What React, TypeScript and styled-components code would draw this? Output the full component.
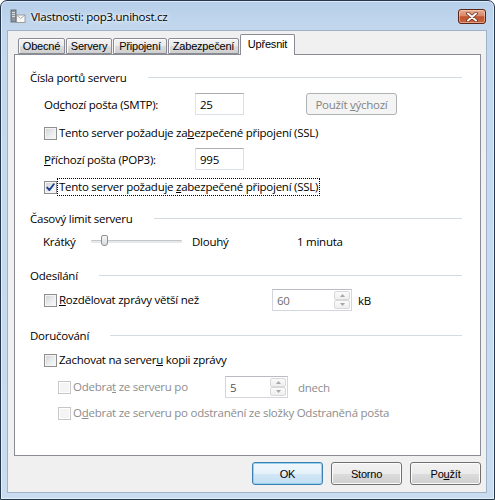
import React from "react";
import styled, { createGlobalStyle } from "styled-components";

const UI = `"Open Sans", "Noto Sans", sans-serif`;
const SHELL = `"Liberation Sans", Arial, sans-serif`;

const GlobalStyle = createGlobalStyle`
  html, body { margin: 0; padding: 0; background: #ffffff; }
  body { font-family: ${UI}; font-size: 11.5px; letter-spacing: -0.25px; color: #000; }
  * { box-sizing: border-box; }
`;

const Window = styled.div`
  width: 495px;
  height: 500px;
  display: flex;
  flex-direction: column;
  padding: 0 7px 6px 6px;
  border: 1px solid #26384e;
  border-radius: 7px 7px 0 0;
  background: linear-gradient(180deg, #b7cfe9 0px, #c3d8ee 30px, #c9dcf0 100%);
  box-shadow: inset 0 0 0 1px rgba(255, 255, 255, 0.55);
`;

const TitleBar = styled.div`
  height: 29px;
  display: flex;
  align-items: center;
  padding: 2px 1px 0 3px;
`;

const TitleText = styled.span`
  margin-left: 5px;
  font-family: ${UI};
  font-size: 11.5px;
  letter-spacing: -0.25px;
  color: #000;
  text-shadow: 0 0 6px #fff, 0 0 3px #fff;
`;

const CloseButton = styled.div`
  margin-left: auto;
  width: 28px;
  height: 15px;
  border: 1px solid #5b2417;
  border-radius: 3px;
  display: flex;
  align-items: center;
  justify-content: center;
  background: linear-gradient(180deg, #e6ab92 0%, #d88a68 45%, #bf5330 52%, #c8673d 100%);
  box-shadow: inset 0 0 0 1px rgba(255, 220, 200, 0.5);
`;

const Client = styled.div`
  flex: 1;
  display: flex;
  flex-direction: column;
  background: #f0f0f0;
  border: 1px solid #9fb2c8;
  padding: 3px 5px 7px 6px;
`;

const TabBar = styled.div`
  height: 20px;
  display: flex;
  align-items: flex-end;
  padding-left: 4px;
`;

const Tab = styled.div<{ $w: number; $active?: boolean }>`
  width: ${(p) => p.$w}px;
  height: ${(p) => (p.$active ? 21 : 16)}px;
  margin-bottom: ${(p) => (p.$active ? -1 : 0)}px;
  position: relative;
  z-index: ${(p) => (p.$active ? 1 : 0)};
  display: flex;
  align-items: center;
  justify-content: center;
  padding-bottom: ${(p) => (p.$active ? 3 : 0)}px;
  font-family: ${SHELL};
  font-size: 11px;
  letter-spacing: -0.2px;
  color: #000;
  border: 1px solid #898c95;
  border-bottom: ${(p) => (p.$active ? "none" : "1px solid #898c95")};
  border-radius: 2px 2px 0 0;
  background: ${(p) =>
    p.$active ? "#ffffff" : "linear-gradient(180deg, #f2f2f2 0%, #ebebeb 50%, #dcdcdc 51%, #cfcfcf 100%)"};
  box-shadow: ${(p) => (p.$active ? "none" : "inset 0 1px 0 #fff, inset 1px 0 0 #fafafa")};
  margin-right: 1px;
`;

const Panel = styled.div`
  flex: 1;
  display: flex;
  flex-direction: column;
  background: #ffffff;
  border: 1px solid #898c95;
  padding: 14px 18px 0 15px;
`;

const Section = styled.div<{ $top: number }>`
  display: flex;
  align-items: center;
  height: 16px;
  margin-top: ${(p) => p.$top}px;
`;

const SectionTitle = styled.span`
  white-space: nowrap;
`;

const Rule = styled.div`
  flex: 1;
  height: 1px;
  margin-left: 21px;
  background: #d3dbe2;
`;

const Row = styled.div<{ $top: number; $h?: number; $indent?: number }>`
  display: flex;
  align-items: center;
  height: ${(p) => p.$h ?? 22}px;
  margin-top: ${(p) => p.$top}px;
  padding-left: ${(p) => p.$indent ?? 14}px;
  white-space: nowrap;
`;

const FieldLabel = styled.span<{ $w: number }>`
  width: ${(p) => p.$w}px;
`;

const TextBox = styled.div<{ $w: number }>`
  width: ${(p) => p.$w}px;
  height: 22px;
  display: flex;
  align-items: center;
  padding-left: 4px;
  background: #fff;
  border: 1px solid #dbdfe6;
  border-top-color: #abadb3;
  border-left-color: #e2e3ea;
`;

const DisabledButton = styled.div`
  margin-left: 62px;
  width: 91px;
  height: 22px;
  display: flex;
  align-items: center;
  justify-content: center;
  border: 1px solid #adb2b5;
  border-radius: 3px;
  background: #f4f4f4;
  color: #838383;
`;

const Check = styled.div<{ $w?: number }>`
  display: flex;
  align-items: center;
  width: ${(p) => (p.$w ? `${p.$w}px` : "auto")};
`;

const Box = styled.span<{ $disabled?: boolean }>`
  width: 13px;
  height: 13px;
  flex: none;
  display: flex;
  align-items: center;
  justify-content: center;
  border: 1px solid ${(p) => (p.$disabled ? "#c6c6c6" : "#8e8f8f")};
  background: ${(p) =>
    p.$disabled ? "#f4f4f4" : "linear-gradient(135deg, #cdd0d5 0%, #e9eaec 50%, #fbfbfb 100%)"};
  box-shadow: inset 0 0 0 1px ${(p) => (p.$disabled ? "#ffffff" : "#f4f4f4")};
`;

const CheckText = styled.span<{ $disabled?: boolean; $focus?: boolean }>`
  margin-left: ${(p) => (p.$focus ? 1 : 2)}px;
  padding: ${(p) => (p.$focus ? "0 1px" : "0")};
  color: ${(p) => (p.$disabled ? "#8d8d8d" : "#000")};
  outline: ${(p) => (p.$focus ? "1px dotted #000" : "none")};
  line-height: 16px;
`;

const Acc = styled.u`
  text-decoration: underline;
  text-underline-offset: 1px;
`;

const SlideLabel = styled.span<{ $w?: number }>`
  width: ${(p) => (p.$w ? `${p.$w}px` : "auto")};
`;

const Slider = styled.div`
  position: relative;
  width: 91px;
  height: 14px;
  margin: 0 10px 0 -1px;
`;

const Track = styled.div`
  position: absolute;
  left: 0;
  right: 0;
  top: 6px;
  height: 3px;
  border-radius: 1px;
  background: #e6e8e9;
  border-top: 1px solid #c4c7c9;
`;

const Thumb = styled.div`
  position: absolute;
  left: 10px;
  top: 1px;
  width: 7px;
  height: 11px;
  border: 1px solid #8d9193;
  border-radius: 2px 2px 3px 3px;
  background: linear-gradient(180deg, #f6f6f6, #dadcdd);
`;

const SpinBox = styled.div<{ $w: number }>`
  width: ${(p) => p.$w}px;
  height: 22px;
  display: flex;
  align-items: stretch;
  padding: 1px;
  background: #fff;
  border: 1px solid #d3d6dc;
  border-top-color: #b9bcc2;
`;

const SpinValue = styled.span<{ $color: string }>`
  flex: 1;
  display: flex;
  align-items: center;
  padding-left: 3px;
  color: ${(p) => p.$color};
`;

const SpinButtons = styled.div`
  width: 16px;
  display: flex;
  flex-direction: column;
`;

const SpinBtn = styled.div`
  flex: 1;
  display: flex;
  align-items: center;
  justify-content: center;
  border: 1px solid #d9d9d9;
  border-radius: 2px;
  background: linear-gradient(180deg, #fafafa, #efefef);
`;

const Unit = styled.span<{ $gap: number; $dim?: boolean }>`
  margin-left: ${(p) => p.$gap}px;
  color: ${(p) => (p.$dim ? "#8d8d8d" : "#000")};
`;

const ButtonRow = styled.div`
  display: flex;
  justify-content: flex-end;
  gap: 8px;
  margin-top: 6px;
`;

const DialogButton = styled.div<{ $default?: boolean }>`
  width: 71px;
  height: 23px;
  display: flex;
  align-items: center;
  justify-content: center;
  font-family: ${SHELL};
  font-size: 11px;
  letter-spacing: -0.2px;
  color: #000;
  border: 1px solid ${(p) => (p.$default ? "#3c7fb1" : "#707070")};
  border-radius: 3px;
  background: ${(p) =>
    p.$default
      ? "linear-gradient(180deg, #f1f8fd 0%, #e5f1fa 50%, #d2e7f6 51%, #c3def2 100%)"
      : "linear-gradient(180deg, #f2f2f2 0%, #ebebeb 50%, #dddddd 51%, #cfcfcf 100%)"};
  box-shadow: inset 0 0 0 1px ${(p) => (p.$default ? "#98d1ef" : "#fcfcfc")};
`;

const Arrow = ({ up }: { up?: boolean }) => (
  <svg width="5" height="3" viewBox="0 0 5 3">
    <path d={up ? "M0 3 L2.5 0 L5 3 Z" : "M0 0 L2.5 3 L5 0 Z"} fill="#a8a8a8" />
  </svg>
);

const Spin = ({ w, value, color }: { w: number; value: string; color: string }) => (
  <SpinBox $w={w}>
    <SpinValue $color={color}>{value}</SpinValue>
    <SpinButtons>
      <SpinBtn>
        <Arrow up />
      </SpinBtn>
      <SpinBtn>
        <Arrow />
      </SpinBtn>
    </SpinButtons>
  </SpinBox>
);

const CheckMark = () => (
  <svg width="9" height="9" viewBox="0 0 9 9">
    <path d="M1.2 4.6 L3.4 7 L7.8 1.2" fill="none" stroke="#1f3f8f" strokeWidth="1.9" strokeLinecap="round" strokeLinejoin="round" />
  </svg>
);

const TitleIcon = () => (
  <svg width="16" height="15" viewBox="0 0 16 15">
    <rect x="1" y="1" width="5" height="12" fill="#8d959e" stroke="#5b6167" strokeWidth="0.8" />
    <rect x="2" y="3" width="3" height="1" fill="#d9dde1" />
    <rect x="2" y="5" width="3" height="1" fill="#d9dde1" />
    <rect x="2" y="7" width="3" height="1" fill="#d9dde1" />
    <rect x="6.5" y="6" width="8.5" height="7.5" fill="#f8f8f8" stroke="#8c8c8c" strokeWidth="0.8" />
    <path d="M6.5 6 L10.75 9.5 L15 6" fill="none" stroke="#9a9a9a" strokeWidth="0.8" />
  </svg>
);

const CloseGlyph = () => (
  <svg width="12" height="10" viewBox="0 0 12 10">
    <path d="M2 1.5 L10 8.5 M10 1.5 L2 8.5" stroke="#6b2a1b" strokeWidth="3.6" strokeLinecap="round" />
    <path d="M2 1.5 L10 8.5 M10 1.5 L2 8.5" stroke="#ffffff" strokeWidth="2" strokeLinecap="round" />
  </svg>
);

export default function App() {
  return (
    <>
      <GlobalStyle />
      <Window>
        <TitleBar>
          <TitleIcon />
          <TitleText>Vlastnosti: pop3.unihost.cz</TitleText>
          <CloseButton>
            <CloseGlyph />
          </CloseButton>
        </TitleBar>
        <Client>
          <TabBar>
            <Tab $w={47}>Obecné</Tab>
            <Tab $w={46}>Servery</Tab>
            <Tab $w={54}>Připojení</Tab>
            <Tab $w={71}>Zabezpečení</Tab>
            <Tab $w={55} $active>
              Upřesnit
            </Tab>
          </TabBar>
          <Panel>
            <Section $top={0}>
              <SectionTitle>Čísla portů serveru</SectionTitle>
              <Rule />
            </Section>
            <Row $top={8}>
              <FieldLabel $w={151}>
                Od<Acc>c</Acc>hozí pošta (SMTP):
              </FieldLabel>
              <TextBox $w={49}>25</TextBox>
              <DisabledButton>
                <span>
                  Použít <Acc>v</Acc>ýchozí
                </span>
              </DisabledButton>
            </Row>
            <Row $top={10} $h={16}>
              <Check>
                <Box />
                <CheckText>
                  Tento server požaduje za<Acc>b</Acc>ezpečené připojení (SSL)
                </CheckText>
              </Check>
            </Row>
            <Row $top={7}>
              <FieldLabel $w={151}>
                <Acc>P</Acc>říchozí pošta (POP3):
              </FieldLabel>
              <TextBox $w={49}>995</TextBox>
            </Row>
            <Row $top={8} $h={18}>
              <Check>
                <Box>
                  <CheckMark />
                </Box>
                <CheckText $focus>
                  Tento server požaduje <Acc>z</Acc>abezpečené připojení (SSL)
                </CheckText>
              </Check>
            </Row>
            <Section $top={14}>
              <SectionTitle>Časový limit serveru</SectionTitle>
              <Rule />
            </Section>
            <Row $top={5} $h={20} $indent={13}>
              <SlideLabel $w={49}>Krátký</SlideLabel>
              <Slider>
                <Track />
                <Thumb />
              </Slider>
              <SlideLabel $w={105}>Dlouhý</SlideLabel>
              <SlideLabel>1 minuta</SlideLabel>
            </Row>
            <Section $top={16}>
              <SectionTitle>Odesílání</SectionTitle>
              <Rule />
            </Section>
            <Row $top={6}>
              <Check $w={228}>
                <Box />
                <CheckText>
                  <Acc>R</Acc>ozdělovat zprávy větší než
                </CheckText>
              </Check>
              <Spin w={80} value="60" color="#6d6d6d" />
              <Unit $gap={6}>kB</Unit>
            </Row>
            <Section $top={16}>
              <SectionTitle>Doručování</SectionTitle>
              <Rule />
            </Section>
            <Row $top={9} $h={16}>
              <Check>
                <Box />
                <CheckText>
                  Zachovat na server<Acc>u</Acc> kopii zprávy
                </CheckText>
              </Check>
            </Row>
            <Row $top={8} $indent={28}>
              <Check $w={167}>
                <Box $disabled />
                <CheckText $disabled>
                  Odebra<Acc>t</Acc> ze serveru po
                </CheckText>
              </Check>
              <Spin w={63} value="5" color="#555555" />
              <Unit $gap={10} $dim>
                dnech
              </Unit>
            </Row>
            <Row $top={7} $h={16} $indent={28}>
              <Check>
                <Box $disabled />
                <CheckText $disabled>
                  O<Acc>d</Acc>ebrat ze serveru po odstranění ze složky Odstraněná pošta
                </CheckText>
              </Check>
            </Row>
          </Panel>
          <ButtonRow>
            <DialogButton $default>OK</DialogButton>
            <DialogButton>Storno</DialogButton>
            <DialogButton>
              Po<Acc>u</Acc>žít
            </DialogButton>
          </ButtonRow>
        </Client>
      </Window>
    </>
  );
}
